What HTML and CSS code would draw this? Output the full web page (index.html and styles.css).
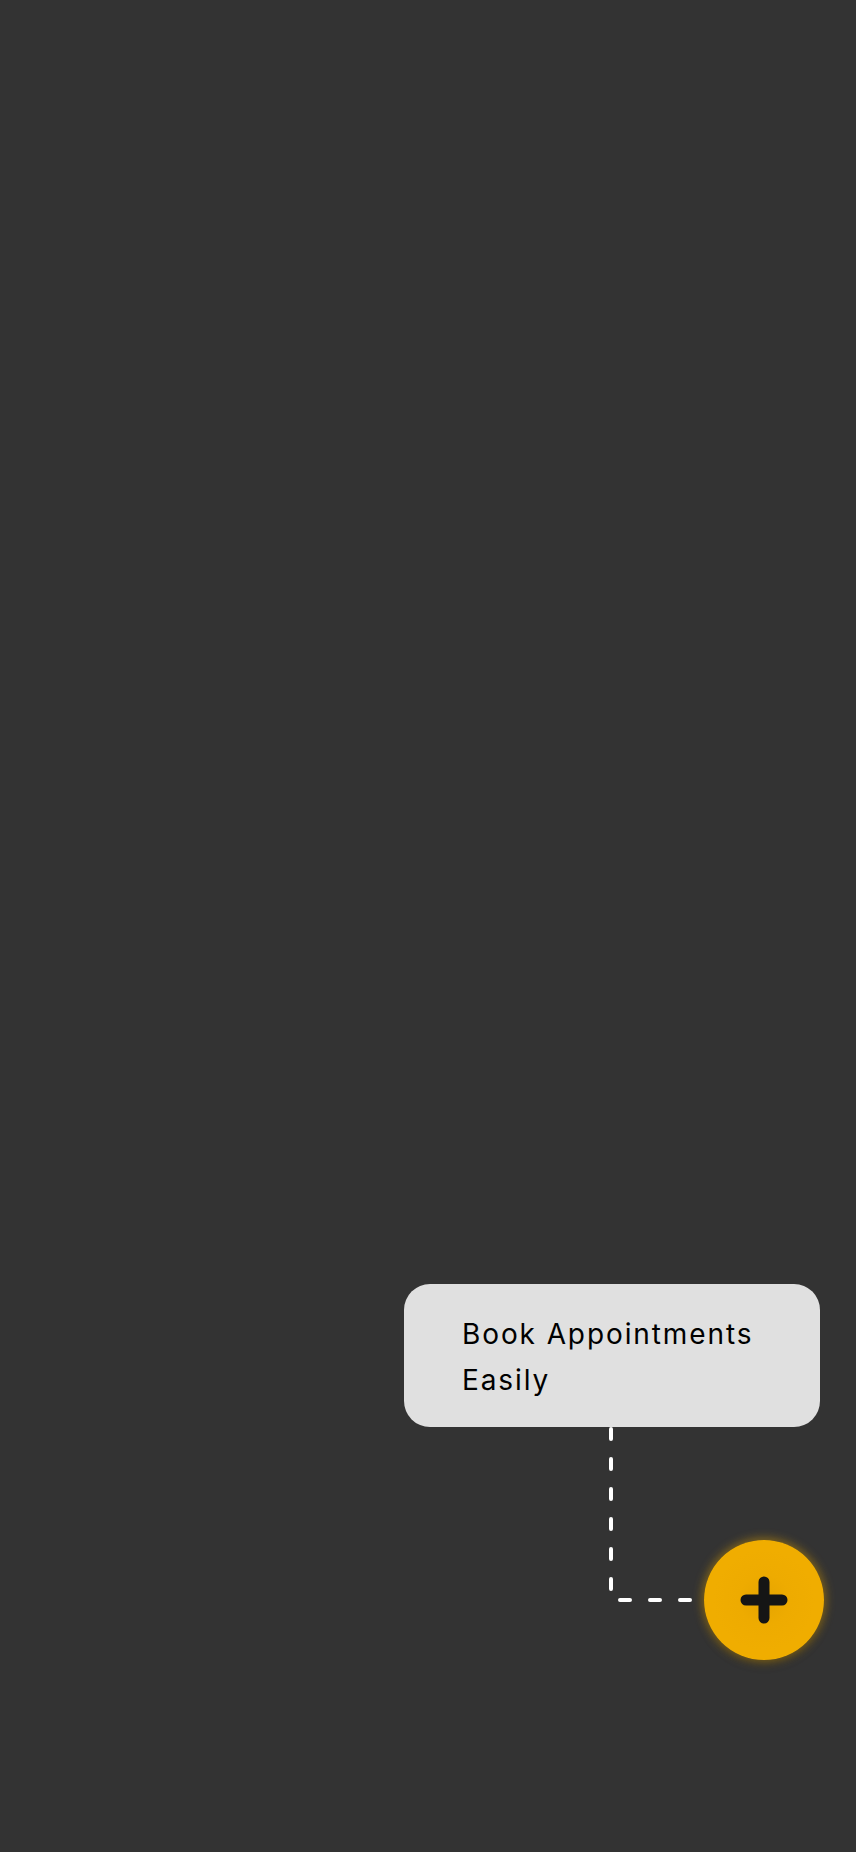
FILE: index.html
```html
<!DOCTYPE html>
<html lang="en">
<head>
<meta charset="utf-8">
<title>Book Appointments</title>
<link rel="stylesheet" href="styles.css">
</head>
<body>
<main class="screen">
  <div class="tip-card">
    <p class="tip-text">Book Appointments Easily</p>
  </div>
  <svg class="connector" width="120" height="190" viewBox="0 0 120 190" aria-hidden="true">
    <path d="M2 0 V173 H100" fill="none" stroke="#ffffff" stroke-width="4" stroke-linecap="round" stroke-dasharray="10 20" stroke-dashoffset="-2"/>
  </svg>
  <button class="fab" aria-label="Add">
    <svg class="fab-icon" width="48" height="48" viewBox="0 0 48 48" aria-hidden="true">
      <path d="M24 6 V42 M6 24 H42" stroke="#151515" stroke-width="11" stroke-linecap="round"/>
    </svg>
  </button>
</main>
</body>
</html>
```
FILE: styles.css
```css
* { box-sizing: border-box; }
html, body {
  margin: 0;
  padding: 0;
  background: #333333;
}
.screen {
  position: relative;
  width: 856px;
  height: 1852px;
  background: #333333;
  overflow: hidden;
  font-family: "Inter", "Open Sans", sans-serif;
}
.tip-card {
  position: absolute;
  left: 404px;
  top: 1284px;
  width: 416px;
  height: 143px;
  padding: 27px 30px 0 58px;
  background: #e0e0e0;
  border-radius: 26px;
}
.tip-text {
  margin: 0;
  font-size: 28px;
  line-height: 46px;
  letter-spacing: 1.9px;
  color: #000;
  font-weight: 400;
}
.connector {
  position: absolute;
  left: 609px;
  top: 1427px;
}
.fab {
  position: absolute;
  left: 704px;
  top: 1540px;
  width: 120px;
  height: 120px;
  border: none;
  padding: 0;
  border-radius: 50%;
  background: radial-gradient(circle at 50% 50%, #e5a400 0%, #eeab00 30%, #f0ad00 60%);
  box-shadow: 0 0 10px 2px rgba(240, 173, 0, 0.45), 0 4px 10px rgba(0, 0, 0, 0.25);
  display: flex;
  align-items: center;
  justify-content: center;
}
.fab-icon {
  display: block;
}
```
